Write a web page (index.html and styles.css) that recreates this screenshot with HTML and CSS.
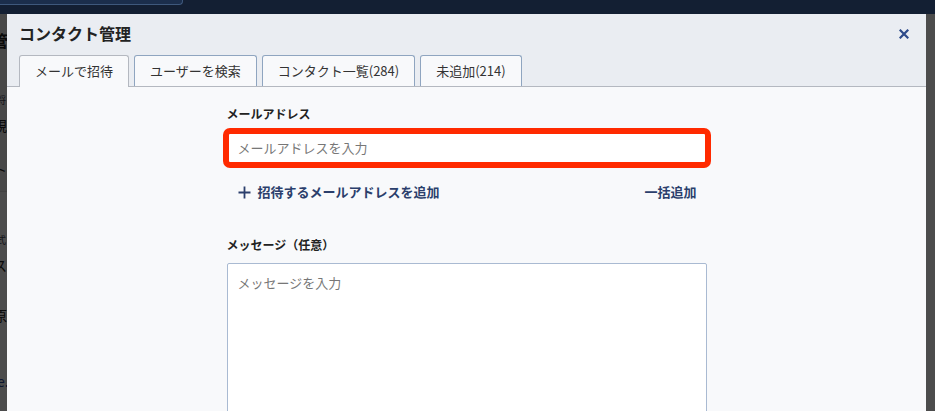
FILE: index.html
```html
<!DOCTYPE html>
<html lang="ja">
<head>
    <meta charset="UTF-8">
    <meta name="viewport" content="width=device-width, initial-scale=1.0">
    <title>コンタクト管理</title>
    <link rel="stylesheet" href="styles.css">
</head>
<body>
    <!-- page behind the dialog -->
    <div class="page">
        <div class="topbar">
            <div class="topbar-btn"></div>
        </div>
        <div class="page-body">
            <div class="page-head">
                <div class="page-title">管</div>
                <div class="page-small">将</div>
                <div class="page-text">規</div>
                <div class="page-text">ト</div>
            </div>
            <div class="page-small">式</div>
            <div class="page-text">ス</div>
            <div class="page-text spaced">原</div>
            <div class="page-link">e.</div>
            <div class="page-link">e.</div>
        </div>
    </div>
    <div class="overlay"></div>

    <div class="modal">
        <div class="modal-header">
            <div class="modal-title">コンタクト管理</div>
            <button class="modal-close" aria-label="閉じる">
                <svg width="10" height="10" viewBox="0 0 10 10">
                    <path d="M1.5 1.5 L8.5 8.5 M8.5 1.5 L1.5 8.5" stroke="#2d4a8a" stroke-width="2.2" stroke-linecap="square"/>
                </svg>
            </button>
            <div class="tabs">
                <div class="tab active">メールで招待</div>
                <div class="tab">ユーザーを検索</div>
                <div class="tab">コンタクト一覧(284)</div>
                <div class="tab">未追加(214)</div>
            </div>
        </div>

        <div class="modal-body">
            <div class="form">
                <div class="field-label">メールアドレス</div>
                <div class="email-input">メールアドレスを入力</div>

                <div class="add-row">
                    <a class="add-link">
                        <svg width="13" height="13" viewBox="0 0 13 13">
                            <path d="M6.5 0.5 V12.5 M0.5 6.5 H12.5" stroke="#2b3f6c" stroke-width="1.8"/>
                        </svg>
                        招待するメールアドレスを追加
                    </a>
                    <a class="bulk-link">一括追加</a>
                </div>

                <div class="field-label message-label">メッセージ（任意）</div>
                <div class="message-input">メッセージを入力</div>
            </div>
        </div>
    </div>
</body>
</html>
```

FILE: styles.css
```css
*, *::after, *::before {
    box-sizing: border-box;
}

body {
    margin: 0;
    font-family: "Noto Sans CJK JP", "Noto Sans", sans-serif;
    background: #ffffff;
    overflow: hidden;
    height: 411px;
}

/* background page */
.page {
    height: 100%;
}

.topbar {
    height: 14px;
    background: #131f33;
}

.topbar-btn {
    width: 183px;
    height: 5px;
    background: #1b2e4c;
    border: 1px solid #3e587c;
    border-top: none;
    border-left: none;
    border-radius: 0 0 4px 0;
}

.page-body {
    width: 7px;
    overflow: hidden;
}

.page-head {
    background: #f1f1f1;
    padding: 14px 0 12px;
    border-bottom: 1px solid #ddd;
}

.page-title {
    font-size: 16px;
    font-weight: bold;
    color: #222;
    margin-left: -8px;
}

.page-small {
    font-size: 10px;
    color: #445;
    margin-top: 40px;
    margin-left: -4px;
}

.page-text {
    font-size: 14px;
    color: #222;
    margin-top: 8px;
    margin-left: -7px;
}

.page-head .page-text + .page-text {
    margin-top: 24px;
}

.page-text.spaced {
    margin-top: 30px;
}

.page-link {
    font-size: 14px;
    color: #2a4a9a;
    margin-top: 46px;
    margin-left: -3px;
}

.overlay {
    position: absolute;
    inset: 14px 0 0 0;
    background: rgba(0, 0, 0, 0.7);
}

/* dialog */
.modal {
    position: absolute;
    top: 14px;
    left: 7px;
    width: 919px;
    height: 420px;
    background: #f8f9fb;
}

.modal-header {
    position: relative;
    background: #eaedf2;
    padding: 9px 12px 0;
    border-bottom: 1px solid #b4b8c0;
}

.modal-title {
    font-size: 16px;
    font-weight: bold;
    line-height: 20px;
    color: #222;
}

.modal-close {
    position: absolute;
    top: 12px;
    right: 14px;
    width: 16px;
    height: 16px;
    padding: 0;
    border: none;
    background: none;
    display: flex;
    align-items: center;
    justify-content: center;
}

.tabs {
    display: flex;
    gap: 5px;
    margin-top: 12px;
}

.tab {
    height: 31px;
    padding: 0 15px;
    border: 1px solid #8fa5c0;
    border-bottom: none;
    border-radius: 3px 3px 0 0;
    background: #f8f9fb;
    font-size: 13px;
    line-height: 30px;
    color: #333;
    white-space: nowrap;
}

.tab.active {
    border-color: #b4b8c0;
    margin-bottom: -1px;
    height: 32px;
}

.modal-body {
    padding-top: 18px;
}

.form {
    width: 480px;
    margin: 0 auto;
}

.field-label {
    font-size: 12px;
    font-weight: bold;
    line-height: 18px;
    color: #222;
}

.email-input {
    margin-top: 9px;
    height: 32px;
    background: #fff;
    border: 2px solid #ff2a00;
    box-shadow: 0 0 0 4px #ff2a00;
    border-radius: 3px;
    padding: 0 9px;
    font-size: 13px;
    line-height: 28px;
    color: #777;
}

.add-row {
    display: flex;
    justify-content: space-between;
    align-items: center;
    margin-top: 19px;
    padding: 0 10px 0 11px;
    font-size: 13px;
    font-weight: bold;
    line-height: 18px;
    color: #2b3f6c;
}

.add-link {
    display: flex;
    align-items: center;
    gap: 7px;
}

.message-label {
    margin-top: 35px;
}

.message-input {
    margin-top: 9px;
    height: 200px;
    background: #fff;
    border: 1px solid #a9bad2;
    border-radius: 2px;
    padding: 9px 10px;
    font-size: 13px;
    line-height: 20px;
    color: #777;
}
```
